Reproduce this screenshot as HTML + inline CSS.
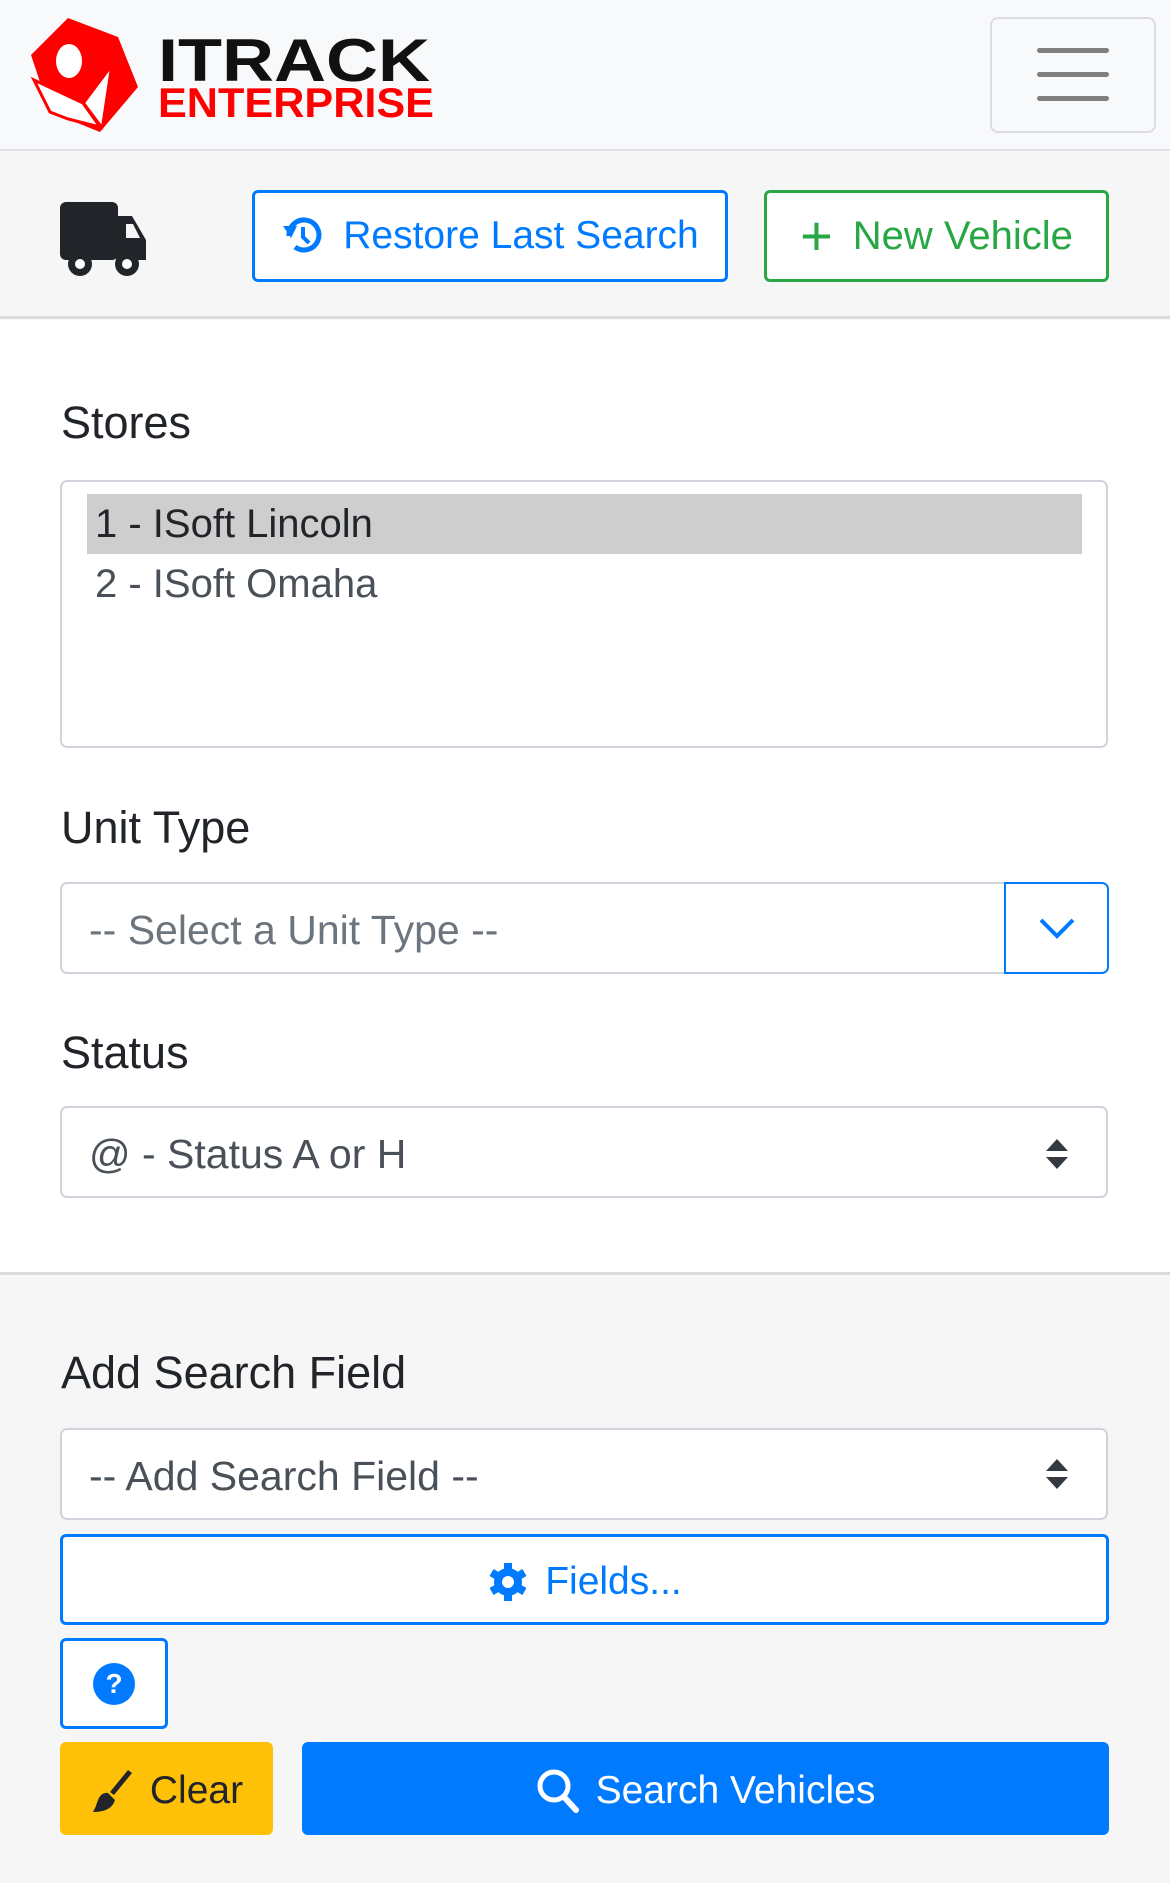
<!DOCTYPE html>
<html><head><meta charset="utf-8"><style>
*{box-sizing:border-box;margin:0;padding:0}
body{width:1170px;height:1883px;overflow:hidden;background:#f6f6f6;font-family:"Liberation Sans","DejaVu Sans",sans-serif;position:relative}
.a{position:absolute}
.hdr{left:0;top:0;width:1170px;height:151px;background:#f8f9fa;border-bottom:2px solid #e0e2e6}
.tb{left:0;top:152px;width:1170px;height:167px;background:#f6f6f6;border-bottom:3px solid #dcdcdc}
.main{left:0;top:320px;width:1170px;height:955px;background:#fff;border-bottom:3px solid #dcdcdc}
.btn{display:flex;align-items:center;justify-content:center;border-radius:6px;font-size:39px}
.lbl{font-size:45px;color:#212529;left:61px}
.sel{left:60px;width:1048px;height:92px;border:2px solid #ced4da;border-radius:7px;background:#fff;font-size:41px;color:#495057;padding-left:27px;display:flex;align-items:center}
</style></head><body>
<div class="a hdr"></div>
<svg class="a" style="left:28px;top:15px" width="410" height="120" viewBox="0 0 410 120">
 <polygon points="40,3 90,22 110,72 72,117 22,97 3,40" fill="#f00"/>
 <polygon points="6,65 55,88 72,112 40,104 22,97" fill="#fff" stroke="#f00" stroke-width="3"/>
 <polygon points="56,88 83,52 74,112" fill="#fff" stroke="#f00" stroke-width="2"/>
 <ellipse cx="41" cy="46" rx="13" ry="17" fill="#fff"/>
 <text x="130" y="66" font-family="Liberation Sans" font-weight="bold" font-size="60" fill="#111" textLength="272" lengthAdjust="spacingAndGlyphs">ITRACK</text>
 <text x="130" y="102" font-family="Liberation Sans" font-weight="bold" font-size="42" fill="#f00" textLength="276" lengthAdjust="spacingAndGlyphs">ENTERPRISE</text>
</svg>
<div class="a" style="left:990px;top:17px;width:166px;height:116px;border:2px solid #dcdde0;border-radius:8px"></div>
<div class="a" style="left:1037px;top:48px;width:72px;height:5px;background:#808080;border-radius:3px"></div>
<div class="a" style="left:1037px;top:72px;width:72px;height:5px;background:#808080;border-radius:3px"></div>
<div class="a" style="left:1037px;top:96px;width:72px;height:5px;background:#808080;border-radius:3px"></div>

<div class="a tb"></div>
<svg class="a" style="left:60px;top:202px" width="92" height="76" viewBox="0 0 92 76">
 <rect x="0" y="0" width="58" height="58" rx="6" fill="#212529"/>
 <path d="M56 14 H72 L86 38 V58 H56 Z" fill="#212529"/>
 <path d="M66 22 H73 L80 36 H66 Z" fill="#f6f6f6"/>
 <circle cx="20" cy="62" r="12" fill="#212529"/><circle cx="20" cy="62" r="5" fill="#fff"/>
 <circle cx="67" cy="62" r="12" fill="#212529"/><circle cx="67" cy="62" r="5" fill="#fff"/>
</svg>
<div class="a btn" style="left:252px;top:190px;width:476px;height:92px;border:3px solid #007bff;background:#fff;color:#007bff">
 <svg width="44" height="44" viewBox="0 0 44 44" style="margin-right:18px"><path d="M8 22 A15 15 0 1 1 14 33" fill="none" stroke="#007bff" stroke-width="5"/><path d="M2 12 L10 24 L16 12 Z" fill="#007bff"/><path d="M22 13 V23 L28 29" fill="none" stroke="#007bff" stroke-width="4"/></svg>Restore Last Search</div>
<div class="a btn" style="left:764px;top:190px;width:345px;height:92px;border:3px solid #28a745;background:#fff;color:#28a745;font-size:40px">
 <span style="font-size:56px;margin-right:20px;line-height:1;font-weight:300">+</span>New Vehicle</div>

<div class="a main"></div>
<div class="a lbl" style="top:397px">Stores</div>
<div class="a" style="left:60px;top:480px;width:1048px;height:268px;border:2px solid #ced4da;border-radius:7px;background:#fff"></div>
<div class="a" style="left:87px;top:494px;width:995px;height:60px;background:#cecece;font-size:40px;color:#212529;padding-left:8px;line-height:60px">1 - ISoft Lincoln</div>
<div class="a" style="left:95px;top:554px;font-size:40px;color:#495057;line-height:60px">2 - ISoft Omaha</div>

<div class="a lbl" style="top:802px">Unit Type</div>
<div class="a sel" style="top:882px;color:#6c757d;padding-top:4px">-- Select a Unit Type --</div>
<div class="a" style="left:1004px;top:882px;width:105px;height:92px;border:2px solid #007bff;border-radius:0 7px 7px 0;background:#fff"></div>
<svg class="a" style="left:1037px;top:915px" width="40" height="26" viewBox="0 0 40 26"><path d="M4 5 L20 21 L36 5" fill="none" stroke="#007bff" stroke-width="4"/></svg>

<div class="a lbl" style="top:1027px">Status</div>
<div class="a sel" style="top:1106px;padding-top:4px">@ - Status A or H</div>
<svg class="a" style="left:1044px;top:1138px" width="26" height="32" viewBox="0 0 26 32"><path d="M2 13 L13 1 L24 13 Z M2 19 L13 31 L24 19 Z" fill="#343a40"/></svg>

<div class="a lbl" style="top:1347px">Add Search Field</div>
<div class="a sel" style="top:1428px;padding-top:4px">-- Add Search Field --</div>
<svg class="a" style="left:1044px;top:1458px" width="26" height="32" viewBox="0 0 26 32"><path d="M2 13 L13 1 L24 13 Z M2 19 L13 31 L24 19 Z" fill="#343a40"/></svg>
<div class="a btn" style="left:60px;top:1534px;width:1049px;height:91px;border:3px solid #007bff;background:#fff;color:#007bff;padding-top:4px">
 <svg width="42" height="42" viewBox="0 0 42 42" style="margin-right:16px"><g fill="#007bff"><circle cx="21" cy="21" r="14"/><rect x="17" y="2" width="8" height="38"/><rect x="17" y="2" width="8" height="38" transform="rotate(60 21 21)"/><rect x="17" y="2" width="8" height="38" transform="rotate(120 21 21)"/></g><circle cx="21" cy="21" r="6" fill="#fff"/></svg>Fields...</div>
<div class="a" style="left:60px;top:1638px;width:108px;height:91px;border:3px solid #007bff;border-radius:6px;background:#fff"></div>
<div class="a" style="left:93px;top:1663px;width:42px;height:42px;border-radius:50%;background:#007bff;color:#fff;font-weight:bold;font-size:28px;text-align:center;line-height:42px">?</div>
<div class="a btn" style="left:60px;top:1742px;width:213px;height:93px;background:#ffc107;color:#212529;padding-top:4px">
 <svg width="46" height="46" viewBox="0 0 46 46" style="margin-right:14px"><path d="M38 2 L42 5 L24 27 L20 24 Z" fill="#212529"/><path d="M18 25 C10 24 8 32 6 38 L3 44 C12 44 22 42 25 32 Z" fill="#212529"/></svg>Clear</div>
<div class="a btn" style="left:302px;top:1742px;width:807px;height:93px;background:#007bff;color:#fff;padding-top:4px">
 <svg width="44" height="46" viewBox="0 0 44 46" style="margin-right:16px"><circle cx="18" cy="18" r="14" fill="none" stroke="#fff" stroke-width="5"/><path d="M28 29 L40 42" stroke="#fff" stroke-width="6" stroke-linecap="round"/></svg>Search Vehicles</div>
</body></html>
